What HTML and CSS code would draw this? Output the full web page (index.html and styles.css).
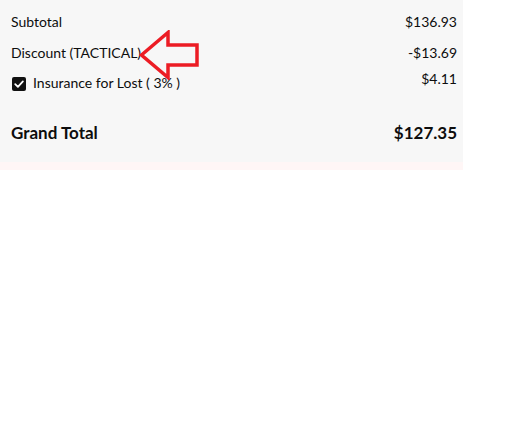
FILE: index.html
```html
<!DOCTYPE html>
<html>
<head>
<meta charset="utf-8">
<link rel="stylesheet" href="styles.css">
</head>
<body>
<div class="summary">
  <div class="rows">
    <div class="row row-sub">
      <span class="label">Subtotal</span>
      <span class="value">$136.93</span>
    </div>
    <div class="row row-disc">
      <span class="label">Discount (TACTICAL)</span>
      <span class="value">-$13.69</span>
    </div>
    <div class="row row-ins">
      <label class="label check-label">
        <span class="checkbox"><svg viewBox="0 0 14 14" width="14" height="14"><path d="M3.2 7.2 L5.9 9.8 L10.9 4.4" fill="none" stroke="#fff" stroke-width="1.8" stroke-linecap="round" stroke-linejoin="round"/></svg></span>
        Insurance for Lost ( 3% )
      </label>
      <span class="value value-ins">$4.11</span>
    </div>
  </div>
  <div class="row total">
    <span class="label">Grand Total</span>
    <span class="value">$127.35</span>
  </div>
  <svg class="arrow" width="60" height="50" viewBox="139 30 60 50">
    <polygon points="141.5,55 168,32.5 168,45 197,45 197,65 168,65 168,77.5" fill="none" stroke="#ec1c24" stroke-width="3.5" stroke-linejoin="miter"/>
  </svg>
</div>
<div class="strip"></div>
</body>
</html>
```
FILE: styles.css
```css
html, body {
  margin: 0;
  padding: 0;
  background: #ffffff;
}
body {
  font-family: "Lato", "Noto Sans", sans-serif;
  color: #0d0d0d;
}
.summary {
  position: relative;
  width: 463px;
  background: #f7f7f7;
  padding: 12px 6px 18px 11px;
  box-sizing: border-box;
}
.rows {
  display: flex;
  flex-direction: column;
}
.row {
  display: flex;
  justify-content: space-between;
  align-items: center;
  font-size: 14px;
  line-height: 20px;
}
.row-sub { height: 20px; }
.row-disc { margin-top: 11px; height: 20px; }
.row-ins { margin-top: 10px; height: 20px; align-items: flex-start; }
.check-label {
  display: flex;
  align-items: center;
  gap: 7px;
}
.checkbox {
  width: 14px;
  height: 14px;
  background: #111111;
  border-radius: 2px;
  display: inline-flex;
  margin-left: 1px;
  margin-top: 1px;
}
.value-ins {
  margin-top: -4px;
}
.total {
  margin-top: 29px;
  font-size: 17px;
  font-weight: 700;
  line-height: 22px;
}
.arrow {
  position: absolute;
  left: 139px;
  top: 30px;
}
.strip {
  width: 463px;
  height: 8px;
  background: #fff6f6;
}
```
